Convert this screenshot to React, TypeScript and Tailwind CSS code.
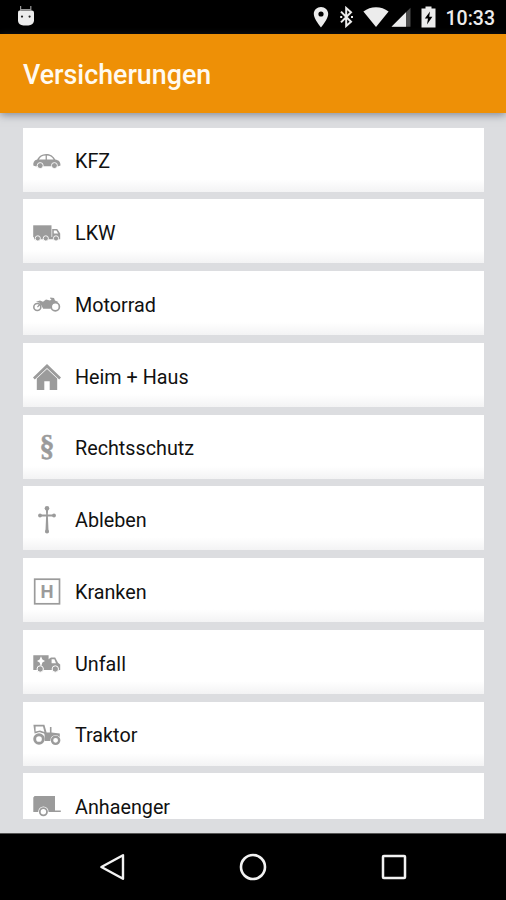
import React from "react";

const CarIcon = () => (
  <>
    <path
      fillRule="evenodd"
      d="M0.3 17.6C0 14.6 1 12.4 4.2 11.6C6.2 8.2 8.6 6.2 13.2 6.1C18 6 20.2 8.4 22.2 11.6C25.6 12.2 27.6 13.6 27.5 17.6L25.4 18.3H2.2ZM6 11.6H12.6V7.6C9.2 7.7 7.4 9 6 11.6ZM13.9 11.6H20.6C19 8.8 17 7.6 13.9 7.6Z"
    />
    <circle cx="7.2" cy="17.6" r="3" stroke="#fff" strokeWidth="0.9" />
    <circle cx="21.4" cy="17.6" r="3" stroke="#fff" strokeWidth="0.9" />
  </>
);

const TruckIcon = () => (
  <>
    <path d="M0.2 6.3H18.5V18.2H0.2Z" />
    <path
      fillRule="evenodd"
      d="M19.2 10H24.2L27.2 14.4V20.2H1V18H19.2ZM20.8 11.5V14.4H25.2L23.4 11.5Z"
    />
    <circle cx="4.8" cy="19.4" r="2.6" stroke="#fff" strokeWidth="0.9" />
    <circle cx="12.8" cy="19.4" r="2.6" stroke="#fff" strokeWidth="0.9" />
    <circle cx="23" cy="19.4" r="2.6" stroke="#fff" strokeWidth="0.9" />
  </>
);

const MotorcycleIcon = () => (
  <>
    <circle cx="4.3" cy="16" r="3.5" fill="none" stroke="#9b9b9b" strokeWidth="1.6" />
    <circle cx="22.3" cy="15.8" r="4.1" fill="none" stroke="#9b9b9b" strokeWidth="1.7" />
    <path d="M3 10.8L7 9.6L10 10.8L13 8.6L17 9.6L18.6 8.4L17.2 7.8V6.6L21 6.9L22 9.4L25.4 11L20 12.2L17.6 17.8H10.2L7.8 13.4L4.8 16.6L4 15.8L7 12Z" />
  </>
);

const HouseIcon = () => (
  <>
    <path d="M14 1.1L28 14.6L26.2 16.4L14 4.9L1.8 16.4L0 14.6Z" />
    <path d="M14 5.9L24.2 15.4V27H16.7V18.2H11.3V27H3.8V15.4Z" />
  </>
);

const ParagraphIcon = () => (
  <text
    x="14"
    y="21.4"
    textAnchor="middle"
    fontSize="30"
    fontWeight="700"
    stroke="#9b9b9b"
    strokeWidth="0.5"
    fontFamily="Liberation Serif, serif"
  >
    §
  </text>
);

const CrossIcon = () => (
  <>
    <path d="M12.8 3H15.2L14.8 8.5H21V10.5H14.9L15.6 26.6H12.4L13.1 10.5H7V8.5H13.2Z" />
    <circle cx="14" cy="2.2" r="2.3" />
    <circle cx="7" cy="9.5" r="1.9" />
    <circle cx="21" cy="9.5" r="1.9" />
    <circle cx="14" cy="25.6" r="2" />
  </>
);

const HospitalIcon = () => (
  <>
    <rect x="1.7" y="1.2" width="24.8" height="24.6" fill="none" stroke="#9b9b9b" strokeWidth="1.7" />
    <text
      x="14"
      y="20.2"
      textAnchor="middle"
      fontSize="18.5"
      fontWeight="700"
      fontFamily="Roboto, sans-serif"
    >
      H
    </text>
  </>
);

const AmbulanceIcon = () => (
  <>
    <path
      fillRule="evenodd"
      d="M0.3 5.2H15.6V20H0.3ZM8 6.2L6.6 9.6L4 11L6.6 12.4L8 17L9.4 12.4L12 11L9.4 9.6Z"
    />
    <path
      fillRule="evenodd"
      d="M15 9.4L18 7.4H22.2L25 12.8L27.2 14.6V20H15ZM18.6 9.2V13.2H23L21.4 9.2Z"
    />
    <circle cx="7.2" cy="19" r="3.2" stroke="#fff" strokeWidth="1" />
    <circle cx="22.3" cy="19" r="3.2" stroke="#fff" strokeWidth="1" />
  </>
);

const TractorIcon = () => (
  <>
    <path
      fillRule="evenodd"
      d="M0.4 2.8H11.4L13.6 10.4H16.9V5H18.5V10.4L26.8 11.4V17H14L11 11.6L6.6 10.2L1.6 11.4ZM2.6 4.4V9.4L7 8.4L11.4 10L10 4.4Z"
    />
    <circle cx="6" cy="17" r="6.4" fill="#fff" />
    <circle cx="6" cy="17" r="4.3" fill="none" stroke="#9b9b9b" strokeWidth="2.9" />
    <path d="M11.6 12.4H18V19H11.8Z" />
    <circle cx="22.6" cy="18.3" r="5.2" fill="#fff" />
    <circle cx="22.6" cy="18.3" r="3.6" fill="none" stroke="#9b9b9b" strokeWidth="2.4" />
  </>
);

const TrailerIcon = () => (
  <>
    <path d="M1.6 2.9H22V17.6H27.8V19H0.3V4.4Z" />
    <circle cx="10.4" cy="18.8" r="5.2" fill="#fff" />
    <circle cx="10.4" cy="18.8" r="3.6" fill="none" stroke="#9b9b9b" strokeWidth="1.8" />
  </>
);

const insurances = [
  { title: "KFZ", icon: <CarIcon /> },
  { title: "LKW", icon: <TruckIcon /> },
  { title: "Motorrad", icon: <MotorcycleIcon /> },
  { title: "Heim + Haus", icon: <HouseIcon /> },
  { title: "Rechtsschutz", icon: <ParagraphIcon /> },
  { title: "Ableben", icon: <CrossIcon /> },
  { title: "Kranken", icon: <HospitalIcon /> },
  { title: "Unfall", icon: <AmbulanceIcon /> },
  { title: "Traktor", icon: <TractorIcon /> },
  { title: "Anhaenger", icon: <TrailerIcon /> },
];

const StatusBar = () => (
  <div className="flex h-[34px] shrink-0 items-center justify-between bg-black pr-[11px] pl-[17px] text-[#ececec]">
    <svg className="-mt-0.5" width="18" height="22" viewBox="0 0 18 22" fill="currentColor">
      <path d="M3.6 1V5.6M13.8 1V5.6M4 4.6H13.4" fill="none" stroke="#999" strokeWidth="1.2" />
      <path d="M2.6 5.4H14.8Q17 5.4 17 7.4V16Q16 20.4 11.4 20.4H6.4Q1.8 20.4 1 16V7.4Q1 5.4 2.6 5.4Z" />
      <circle cx="5" cy="11.6" r="1.1" fill="#222" />
      <circle cx="12.6" cy="11.6" r="1.1" fill="#222" />
    </svg>
    <div className="flex items-center">
      <svg className="mr-[10px]" width="16" height="22" viewBox="0 0 16 22" fill="currentColor">
        <path
          fillRule="evenodd"
          d="M8 1C12 1 15.2 4 15.2 8C15.2 13 8 21.4 8 21.4S0.8 13 0.8 8C0.8 4 4 1 8 1ZM8 5.4A2.6 2.6 0 1 0 8 10.6A2.6 2.6 0 1 0 8 5.4Z"
        />
      </svg>
      <svg
        className="mr-[9px]"
        width="15"
        height="22"
        viewBox="0 0 15 22"
        fill="none"
        stroke="currentColor"
        strokeWidth="2"
      >
        <path d="M2 5.6L12 15.8L7.2 20V2L12 6.2L2 16.4" />
        <path d="M1.2 11H3.2M12 11H14" />
      </svg>
      <svg className="mr-[2px]" width="26" height="22" viewBox="0 0 26 22" fill="currentColor">
        <path d="M0.4 5.6Q6 1.2 13 1.2T25.6 5.6L13 21Z" />
      </svg>
      <svg className="mr-[10px]" width="20" height="22" viewBox="0 0 20 22">
        <path d="M19.5 1.8V20.8H0.5Z" fill="#4c4c4c" />
        <path d="M15 6.3V20.8H0.5Z" fill="#ececec" />
      </svg>
      <svg className="mr-[10px]" width="15" height="22" viewBox="0 0 15 22" fill="currentColor">
        <path
          fillRule="evenodd"
          d="M4.5 0.4H10.5V2.4H14.5V21.6H0.5V2.4H4.5ZM9 5.4L3.8 12.6H7L6 18.6L11.4 10.8H8.2Z"
        />
      </svg>
      <span className="mt-[3px] text-[19.5px] leading-none font-medium">10:33</span>
    </div>
  </div>
);

const NavigationBar = () => (
  <div className="flex h-[67px] shrink-0 items-center justify-center gap-[113px] border-t border-[#555] bg-black">
    <svg width="28" height="28" viewBox="0 0 28 28" fill="none" stroke="#f2f2f2" strokeWidth="2.4">
      <path d="M25 2.2V25.8L3.4 14Z" strokeLinejoin="round" />
    </svg>
    <svg width="28" height="28" viewBox="0 0 28 28" fill="none" stroke="#f2f2f2" strokeWidth="2.6">
      <circle cx="14" cy="14" r="12" />
    </svg>
    <svg width="28" height="28" viewBox="0 0 28 28" fill="none" stroke="#f2f2f2" strokeWidth="2.5">
      <rect x="3" y="3" width="22" height="22" rx="0.8" />
    </svg>
  </div>
);

export default function App() {
  return (
    <div className="flex h-[900px] w-[506px] flex-col overflow-hidden bg-[#dcdde0] font-[Roboto,sans-serif]">
      <StatusBar />
      <header className="z-10 flex h-[79px] shrink-0 items-center bg-[#ee9006] pt-[3px] pl-[23px] shadow-[0_2px_8px_rgba(60,70,85,0.55)]">
        <h1 className="text-[26.8px] font-medium text-[#fffaf0]">Versicherungen</h1>
      </header>
      <main className="min-h-0 flex-1 px-[23px] pt-[14.6px] pb-[14px]">
        <ul className="flex h-full w-[461px] flex-col gap-[7.75px] overflow-hidden">
          {insurances.map((item) => (
            <li
              key={item.title}
              className="flex h-[64px] shrink-0 items-center bg-linear-to-b from-white from-80% to-[#f3f3f4] pt-[4px] pl-[10px]"
            >
              <svg
                className="mr-[14px] overflow-visible"
                width="28"
                height="28"
                viewBox="0 0 28 28"
                fill="#9b9b9b"
              >
                {item.icon}
              </svg>
              <span className="pt-px text-[19.75px] text-[#111]">{item.title}</span>
            </li>
          ))}
        </ul>
      </main>
      <NavigationBar />
    </div>
  );
}
